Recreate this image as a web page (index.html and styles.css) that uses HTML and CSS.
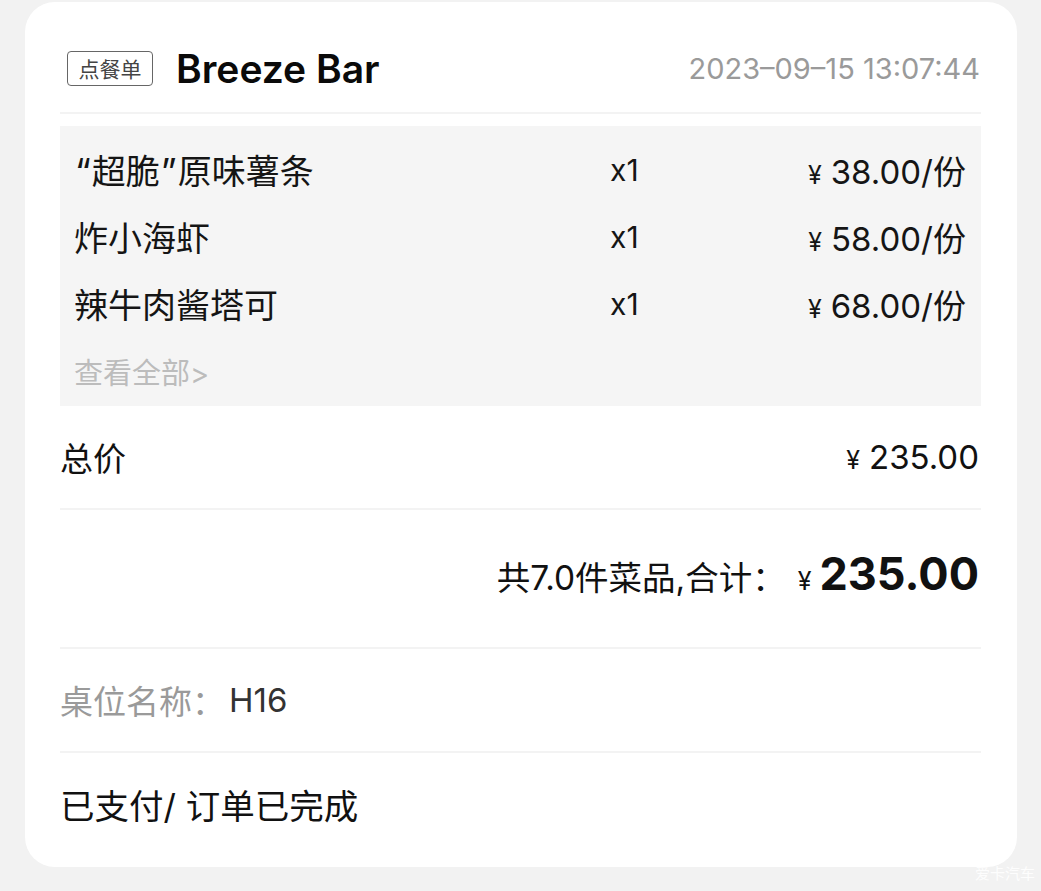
FILE: index.html
```html
<!DOCTYPE html>
<html lang="zh-CN">
<head>
<meta charset="utf-8">
<title>订单</title>
<link rel="stylesheet" href="styles.css">
</head>
<body>
<div class="page">
  <div class="card">
    <div class="header">
      <span class="tag">点餐单</span>
      <span class="shop">Breeze Bar</span>
      <span class="time">2023–09–15 13:07:44</span>
    </div>
    <div class="items">
      <div class="item">
        <span class="name"><span class="q ql">“</span>超脆<span class="q qr">”</span>原味薯条</span>
        <span class="qty">x1</span>
        <span class="price"><span class="yen">¥</span>38.00/份</span>
      </div>
      <div class="item">
        <span class="name">炸小海虾</span>
        <span class="qty">x1</span>
        <span class="price"><span class="yen">¥</span>58.00/份</span>
      </div>
      <div class="item">
        <span class="name">辣牛肉酱塔可</span>
        <span class="qty">x1</span>
        <span class="price"><span class="yen">¥</span>68.00/份</span>
      </div>
      <div class="item more">查看全部&gt;</div>
    </div>
    <div class="row total">
      <span>总价</span>
      <span class="amount"><span class="yen">¥</span>235.00</span>
    </div>
    <div class="row summary">
      <span class="sum-label">共7.0件菜品,合计：</span>
      <span class="sum-yen">¥</span>
      <span class="sum-value">235.00</span>
    </div>
    <div class="row table">
      <span class="label">桌位名称：</span><span class="value">H16</span>
    </div>
    <div class="row status">已支付/ 订单已完成</div>
  </div>
  <div class="watermark">爱卡汽车</div>
</div>
</body>
</html>
```
FILE: styles.css
```css
* { box-sizing: border-box; }
html, body {
  margin: 0;
  padding: 0;
  background: #f2f2f2;
}
body {
  font-family: Inter, "Noto Sans CJK SC", sans-serif;
  color: #111;
}
.page {
  position: relative;
  width: 1041px;
  height: 891px;
  padding: 2px 24px 0 25px;
}
.card {
  width: 992px;
  height: 865px;
  background: #fff;
  border-radius: 30px;
  padding: 0 36px 0 35px;
}
.header {
  height: 112px;
  padding: 22px 1px 0 7px;
  display: flex;
  align-items: center;
  border-bottom: 2px solid #f3f3f3;
}
.tag {
  display: inline-flex;
  align-items: center;
  justify-content: center;
  width: 86px;
  height: 35px;
  border: 1.5px solid #666;
  border-radius: 4px;
  font-family: "Noto Sans CJK SC", sans-serif;
  font-size: 21px;
  font-weight: 400;
  color: #444;
  line-height: 1;
}
.shop {
  margin-left: 23px;
  font-size: 39px;
  font-weight: 600;
  color: #0a0a0a;
  line-height: 1;
}
.time {
  margin-left: auto;
  font-size: 29px;
  color: #9a9a9a;
  line-height: 1;
}
.items {
  margin-top: 12px;
  background: #f5f5f5;
  padding: 10px 15px 0 14px;
  height: 280px;
}
.item {
  height: 67px;
  display: grid;
  grid-template-columns: 536px 1fr auto;
  align-items: center;
  font-size: 34px;
  color: #151515;
}
.q {
  font-size: 36px;
}
.ql {
  margin-left: 1px;
  margin-right: 1px;
}
.qr {
  margin-left: 1px;
  margin-right: 1px;
}
.qty {
  font-size: 30px;
}
.price {
  font-size: 33px;
}
.yen {
  font-size: 25px;
  margin-right: 9px;
}
.item.more {
  display: flex;
  font-size: 29px;
  color: #bcbcbc;
}
.row {
  display: flex;
  align-items: center;
  border-bottom: 2px solid #f3f3f3;
  font-size: 33px;
}
.total {
  height: 104px;
  justify-content: space-between;
  padding-right: 2px;
}
.amount {
  font-size: 33px;
}
.summary {
  height: 139px;
  justify-content: flex-end;
  align-items: baseline;
  padding-top: 36px;
  padding-right: 2px;
}
.sum-label {
  font-size: 33.5px;
}
.sum-yen {
  font-size: 25px;
  margin-left: 12px;
  margin-right: 8px;
}
.sum-value {
  font-size: 45px;
  font-weight: 700;
}
.table {
  height: 104px;
}
.label {
  color: #9a9a9a;
}
.value {
  color: #333;
  margin-left: 4px;
}
.status {
  height: 102px;
  border-bottom: none;
  font-size: 34.5px;
}
.watermark {
  position: absolute;
  right: 6px;
  bottom: 8px;
  font-family: "Noto Sans CJK SC", sans-serif;
  font-size: 15px;
  color: rgba(255, 255, 255, 0.9);
}
```
